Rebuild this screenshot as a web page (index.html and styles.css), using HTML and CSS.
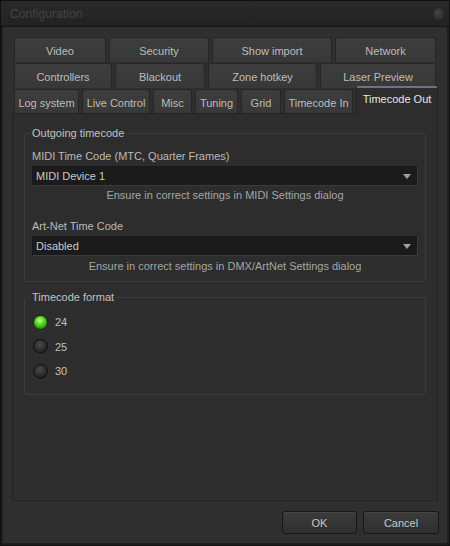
FILE: index.html
```html
<!DOCTYPE html>
<html>
<head>
<meta charset="utf-8">
<link rel="stylesheet" href="styles.css">
</head>
<body>
<div class="window">
  <div class="titlebar">
    <span class="title">Configuration</span>
    <span class="orb"></span>
  </div>
  <div class="client">
    <div class="tabs">
      <div class="tabrow r1">
        <div class="tab">Video</div>
        <div class="tab">Security</div>
        <div class="tab">Show import</div>
        <div class="tab">Network</div>
      </div>
      <div class="tabrow r2">
        <div class="tab">Controllers</div>
        <div class="tab">Blackout</div>
        <div class="tab">Zone hotkey</div>
        <div class="tab">Laser Preview</div>
      </div>
      <div class="tabrow r3">
        <div class="tab">Log system</div>
        <div class="tab">Live Control</div>
        <div class="tab">Misc</div>
        <div class="tab">Tuning</div>
        <div class="tab">Grid</div>
        <div class="tab">Timecode In</div>
        <div class="tab active">Timecode Out</div>
      </div>
    </div>
    <div class="panel">
      <fieldset class="group g1">
        <legend>Outgoing timecode</legend>
        <div class="label first">MIDI Time Code (MTC, Quarter Frames)</div>
        <div class="combo"><span>MIDI Device 1</span><span class="arrow"></span></div>
        <div class="note">Ensure in correct settings in MIDI Settings dialog</div>
        <div class="label second">Art-Net Time Code</div>
        <div class="combo"><span>Disabled</span><span class="arrow"></span></div>
        <div class="note">Ensure in correct settings in DMX/ArtNet Settings dialog</div>
      </fieldset>
      <fieldset class="group g2">
        <legend>Timecode format</legend>
        <div class="radios">
          <div class="radio"><span class="dot on"></span><span>24</span></div>
          <div class="radio"><span class="dot"></span><span>25</span></div>
          <div class="radio"><span class="dot"></span><span>30</span></div>
        </div>
      </fieldset>
    </div>
    <div class="buttons">
      <div class="btn ok">OK</div>
      <div class="btn cancel">Cancel</div>
    </div>
  </div>
</div>
</body>
</html>
```
FILE: styles.css
```css
html, body {
  margin: 0;
  padding: 0;
  background: #1b1b1b;
}
body {
  font-family: "Liberation Sans", Arial, sans-serif;
  font-size: 11px;
  color: #bcbcbc;
}
.window {
  width: 450px;
  height: 546px;
  box-sizing: border-box;
  border: 1px solid #101010;
  background: #1e1e1e;
  display: flex;
  flex-direction: column;
}
.titlebar {
  height: 25px;
  flex: none;
  background: linear-gradient(#2a2a2a, #222);
  border-bottom: 1px solid #141414;
  display: flex;
  align-items: center;
  justify-content: space-between;
  padding: 0 5px 0 9px;
}
.title {
  font-size: 12px;
  color: #434343;
  letter-spacing: 0.1px;
}
.orb {
  width: 11px;
  height: 12px;
  border-radius: 50%;
  background: radial-gradient(circle at 45% 40%, #454545, #323232 55%, #262626 100%);
}
.client {
  flex: 1;
  margin: 0 2px 2px 2px;
  background: #2f2f2f;
  padding: 10px 9px 0 9px;
  display: flex;
  flex-direction: column;
}
.tabs {
  display: flex;
  flex-direction: column;
  gap: 1px;
  margin-left: 2px;
}
.tabrow {
  display: grid;
  column-gap: 3px;
  height: 25px;
}
.r1 { grid-template-columns: 92px 100px 120px 101px; }
.r2 { grid-template-columns: 98px 90px 109px 116px; }
.r3 { grid-template-columns: 65px 68px 39px 43px 40px 69px 82px; }
.tab {
  box-sizing: border-box;
  background: linear-gradient(#3d3d3d, #383838);
  border: 1px solid #262626;
  border-bottom: none;
  border-radius: 3px 3px 0 0;
  display: flex;
  align-items: center;
  justify-content: center;
  color: #bdbdbd;
  white-space: nowrap;
  padding-top: 1px;
}
.tab.active {
  position: relative;
  z-index: 1;
  margin-top: -3px;
  height: 29px;
  background: #2d2d2d;
  border: 1px solid #222;
  border-top: 2px solid #66758a;
  border-bottom: none;
  color: #e6e6e6;
  align-items: flex-start;
  padding-top: 5px;
}
.panel {
  box-sizing: border-box;
  height: 389px;
  background: #2d2d2d;
  border: 1px solid #222;
  border-radius: 0 0 3px 3px;
  box-shadow: 0 1px 0 #363636;
  padding: 12px 11px 0 11px;
  margin-top: -1px;
  display: flex;
  flex-direction: column;
}
.group {
  margin: 0;
  border: 1px solid #3c3c3c;
  border-radius: 3px;
  padding: 0 7px;
  min-width: 0;
}
.group legend {
  padding: 0 2px;
  margin-left: -2px;
  line-height: 14px;
  color: #c2c2c2;
}
.g1 { padding-bottom: 8px; }
.label {
  line-height: 14px;
  color: #bababa;
}
.label.first { margin-top: 9px; }
.label.second { margin-top: 17px; }
.combo {
  box-sizing: border-box;
  height: 20px;
  margin-top: 3px;
  background: #1b1b1b;
  border: 1px solid;
  border-color: #181818 #3b3b3b #3b3b3b #181818;
  display: flex;
  align-items: center;
  justify-content: space-between;
  padding: 0 6px 0 3px;
  color: #cacaca;
}
.arrow {
  width: 0;
  height: 0;
  border-left: 4px solid transparent;
  border-right: 4px solid transparent;
  border-top: 5px solid #a0a0a0;
}
.note {
  line-height: 14px;
  margin-top: 2px;
  text-align: center;
  color: #a6a6a6;
}
.g1 .note:last-child { margin-top: 3px; }
.g2 {
  margin-top: 8px;
  padding-bottom: 10px;
}
.radios {
  margin-top: 6px;
  display: flex;
  flex-direction: column;
}
.radio {
  height: 24.5px;
  display: flex;
  align-items: center;
  gap: 7px;
  padding-left: 1px;
  color: #c0c0c0;
}
.dot {
  width: 15px;
  height: 15px;
  box-sizing: border-box;
  border-radius: 50%;
  border: 1px solid #0e0e0e;
  background: radial-gradient(circle at 45% 35%, #4a4a4a, #2a2a2a 55%, #161616 100%);
  box-shadow: 0 1px 0 #3a3a3a;
}
.dot.on {
  background: radial-gradient(circle at 45% 35%, #b8ff8a, #55d41f 40%, #2a8a0c 75%, #1b4d0a 100%);
  border-color: #142a08;
}
.buttons {
  display: flex;
  justify-content: flex-end;
  gap: 6px;
  margin-top: 9px;
  margin-right: -1px;
}
.btn {
  box-sizing: border-box;
  height: 23px;
  background: linear-gradient(#3b3b3b, #2f2f2f);
  border: 1px solid #171717;
  border-radius: 3px;
  box-shadow: inset 0 1px 0 #474747;
  display: flex;
  align-items: center;
  justify-content: center;
  color: #c8c8c8;
  font-size: 11px;
}
.ok { width: 75px; }
.cancel { width: 76px; }
```
